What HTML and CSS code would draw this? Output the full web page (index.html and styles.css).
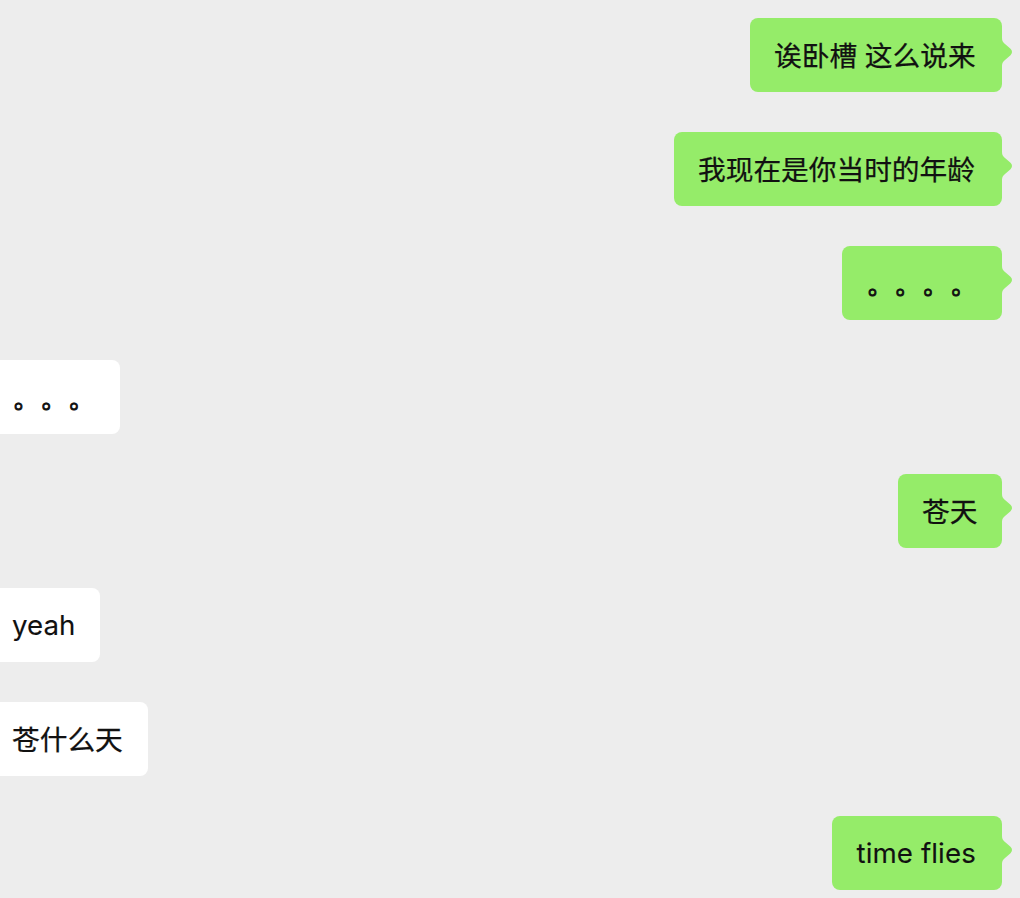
FILE: index.html
```html
<!DOCTYPE html>
<html lang="zh-CN">
<head>
    <meta charset="UTF-8">
    <meta name="viewport" content="width=device-width, initial-scale=1.0">
    <title>Chat</title>
    <link rel="stylesheet" href="styles.css">
</head>
<body>
    <svg width="0" height="0" class="defs">
        <symbol id="tail" viewBox="0 0 11 28">
            <path d="M0 0H1C1 3 2 4.500 4 6L9.500 10.800Q12.500 14 9.500 17.200L4 22C2 23.500 1 25 1 28H0Z"/>
        </symbol>
    </svg>
    <div class="chat">
        <div class="message sent w-252"><span class="text">诶卧槽 这么说来</span><svg class="tail"><use href="#tail"/></svg></div>
        <div class="message sent w-328"><span class="text">我现在是你当时的年龄</span><svg class="tail"><use href="#tail"/></svg></div>
        <div class="message sent dots w-160"><span class="text">。。。。</span><svg class="tail"><use href="#tail"/></svg></div>
        <div class="message received dots w-120"><span class="text">。。。</span></div>
        <div class="message sent w-104"><span class="text">苍天</span><svg class="tail"><use href="#tail"/></svg></div>
        <div class="message received latin w-100"><span class="text">yeah</span></div>
        <div class="message received w-148"><span class="text">苍什么天</span></div>
        <div class="message sent latin w-170"><span class="text">time flies</span><svg class="tail"><use href="#tail"/></svg></div>
    </div>
</body>
</html>
```

FILE: styles.css
```css
body {
    margin: 0;
    background-color: #ededed;
    font-family: Inter, "Noto Sans CJK SC", sans-serif;
    overflow: hidden;
}
.defs {
    display: block;
}
.chat {
    display: flex;
    flex-direction: column;
    gap: 40px;
    padding: 18px 18px 8px 0;
}
.message {
    position: relative;
    box-sizing: border-box;
    height: 74px;
    padding: 1px 0 0 24px;
    border-radius: 8px;
    color: #111;
    font-size: 27.7px;
    line-height: 74px;
    white-space: nowrap;
    text-spacing-trim: space-all;
    -webkit-text-stroke: 0.25px #111;
}
.sent {
    align-self: flex-end;
    background-color: #95ec69;
}
.received {
    align-self: flex-start;
    padding-left: 12px;
    border-radius: 0 8px 8px 0;
    background-color: #fff;
}
.latin {
    padding-top: 0;
    -webkit-text-stroke: 0.1px #111;
}
.sent.latin {
    padding-left: 24.5px;
    letter-spacing: 0.1px;
}
.dots {
    padding-top: 3px;
    padding-left: 26px;
    font-size: 23px;
    letter-spacing: 4.8px;
    -webkit-text-stroke: 0.9px #111;
}
.received.dots {
    padding-left: 14px;
}
/* bubble widths */
.w-100 { width: 100px; }
.w-104 { width: 104px; }
.w-120 { width: 120px; }
.w-148 { width: 148px; }
.w-160 { width: 160px; }
.w-170 { width: 170px; }
.w-252 { width: 252px; }
.w-328 { width: 328px; }
/* bubble tail */
.tail {
    position: absolute;
    top: 20px;
    right: -10px;
    width: 11px;
    height: 28px;
    fill: #95ec69;
}
```
